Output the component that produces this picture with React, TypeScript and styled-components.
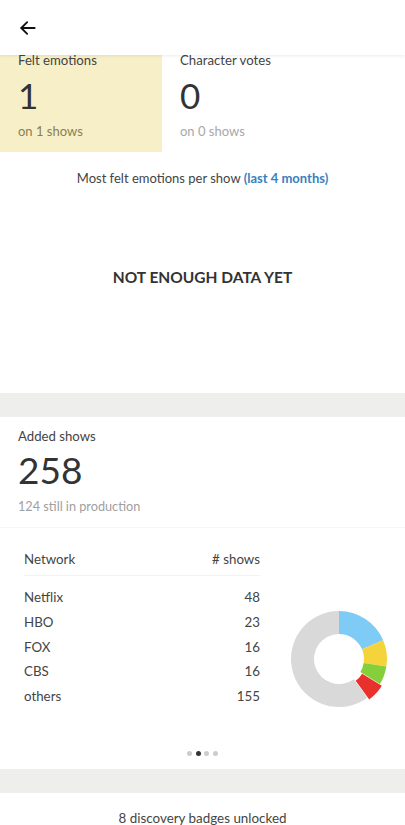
import * as React from 'react';
import styled, { createGlobalStyle } from 'styled-components';

const GlobalStyle = createGlobalStyle`
  html, body {
    margin: 0;
    padding: 0;
    background: #ffffff;
    font-family: Lato, "Open Sans", sans-serif;
    color: #333333;
  }
`;

const Page = styled.div`
  width: 405px;
  height: 825px;
  overflow: hidden;
  background: #ffffff;
  position: relative;
`;

const Header = styled.header`
  height: 55px;
  display: flex;
  align-items: center;
  padding-left: 18px;
  background: #ffffff;
  box-shadow: 0 1px 3px rgba(0, 0, 0, 0.08);
  position: relative;
  z-index: 1;
`;

const StatsRow = styled.div`
  display: flex;
  height: 97px;
`;

const StatCard = styled.div<{ highlight?: boolean }>`
  width: 162px;
  padding: 0 0 0 18px;
  box-sizing: border-box;
  background: ${({ highlight }) => (highlight ? '#f7efc8' : 'transparent')};
  display: flex;
  flex-direction: column;
`;

const StatLabel = styled.div`
  font-size: 13.2px;
  line-height: 15px;
  color: #444444;
  margin-top: -2px;
`;

const StatNumber = styled.div`
  font-size: 35px;
  line-height: 38px;
  color: #333333;
  margin-top: 8px;
`;

const StatSub = styled.div<{ highlight?: boolean }>`
  font-size: 13px;
  line-height: 15px;
  color: ${({ highlight }) => (highlight ? '#8a8050' : '#a8a8a8')};
  margin-top: 10px;
`;

const EmotionSection = styled.section`
  height: 241px;
  display: flex;
  flex-direction: column;
  align-items: center;
`;

const EmotionTitle = styled.div`
  margin-top: 19px;
  font-size: 13px;
  line-height: 15px;
  color: #444444;
  strong {
    color: #3a7fc0;
    font-weight: 700;
  }
`;

const EmptyNote = styled.div`
  margin-top: 82px;
  font-size: 15.5px;
  font-weight: 700;
  color: #333333;
`;

const Band = styled.div`
  height: 24px;
  background: #eeeeec;
`;

const AddedSection = styled.section`
  padding: 12px 18px 0;
  height: 111px;
  box-sizing: border-box;
  border-bottom: 1px solid #f5f5f5;
`;

const AddedLabel = styled.div`
  font-size: 13.2px;
  line-height: 15px;
  color: #444444;
`;

const AddedNumber = styled.div`
  font-size: 37px;
  line-height: 38px;
  color: #333333;
  margin-top: 7px;
`;

const AddedSub = styled.div`
  font-size: 12.7px;
  line-height: 15px;
  color: #a0a0a0;
  margin-top: 10px;
`;

const NetworkArea = styled.div`
  display: flex;
  align-items: flex-start;
  padding: 24px 0 0 24px;
  height: 241px;
  box-sizing: border-box;
  position: relative;
`;

const Table = styled.div`
  width: 236px;
  display: flex;
  flex-direction: column;
`;

const HeadRow = styled.div`
  display: flex;
  justify-content: space-between;
  font-size: 13.3px;
  line-height: 15px;
  color: #444444;
  padding-bottom: 8px;
  border-bottom: 1px solid #f3f3f3;
  margin-bottom: 14px;
`;

const Row = styled.div`
  display: flex;
  justify-content: space-between;
  font-size: 13.3px;
  line-height: 15px;
  height: 24.8px;
  color: #444444;
`;

const ChartBox = styled.div`
  margin-left: 29px;
  margin-top: 57px;
`;

const Dots = styled.div`
  position: absolute;
  left: 0;
  right: 0;
  bottom: 13px;
  display: flex;
  justify-content: center;
  gap: 3.5px;
`;

const Dot = styled.span<{ active?: boolean }>`
  width: 5px;
  height: 5px;
  border-radius: 50%;
  background: ${({ active }) => (active ? '#333333' : '#cccccc')};
`;

const BadgeLine = styled.div`
  text-align: center;
  font-size: 13.4px;
  line-height: 15px;
  color: #444444;
  padding-top: 18px;
`;

const networks = [
  { name: 'Netflix', count: 48, color: '#7ecbf6' },
  { name: 'HBO', count: 23, color: '#f5d33a' },
  { name: 'FOX', count: 16, color: '#86cf3c' },
  { name: 'CBS', count: 16, color: '#e8302c' },
  { name: 'others', count: 155, color: '#d9d9d9' },
];

function polar(cx: number, cy: number, r: number, deg: number) {
  const a = ((deg - 90) * Math.PI) / 180;
  return [cx + r * Math.cos(a), cy + r * Math.sin(a)];
}

function arcPath(cx: number, cy: number, ro: number, ri: number, a0: number, a1: number) {
  const large = a1 - a0 > 180 ? 1 : 0;
  const [x0, y0] = polar(cx, cy, ro, a0);
  const [x1, y1] = polar(cx, cy, ro, a1);
  const [x2, y2] = polar(cx, cy, ri, a1);
  const [x3, y3] = polar(cx, cy, ri, a0);
  return `M${x0} ${y0} A${ro} ${ro} 0 ${large} 1 ${x1} ${y1} L${x2} ${y2} A${ri} ${ri} 0 ${large} 0 ${x3} ${y3} Z`;
}

function Donut() {
  const total = networks.reduce((s, n) => s + n.count, 0);
  let start = 0;
  return (
    <svg width="100" height="100" viewBox="0 0 100 100">
      {networks.map((n, i) => {
        const sweep = (n.count / total) * 360;
        const a0 = start;
        const a1 = start + sweep;
        start = a1;
        const exploded = n.name === 'CBS';
        const mid = (a0 + a1) / 2;
        const [dx, dy] = exploded ? polar(0, 0, 2.5, mid) : [0, 0];
        return (
          <path
            key={i}
            d={arcPath(50 + dx, 50 + dy, 48, 25, a0, a1)}
            fill={n.color}
          />
        );
      })}
    </svg>
  );
}

function BackArrow() {
  return (
    <svg width="20" height="20" viewBox="0 0 24 24" fill="none" stroke="#111" strokeWidth="2.2" strokeLinecap="round" strokeLinejoin="round">
      <path d="M20 12H4" />
      <path d="M11 5l-7 7 7 7" />
    </svg>
  );
}

export default function App() {
  return (
    <Page>
      <GlobalStyle />
      <Header>
        <BackArrow />
      </Header>
      <StatsRow>
        <StatCard highlight>
          <StatLabel>Felt emotions</StatLabel>
          <StatNumber>1</StatNumber>
          <StatSub highlight>on 1 shows</StatSub>
        </StatCard>
        <StatCard>
          <StatLabel>Character votes</StatLabel>
          <StatNumber>0</StatNumber>
          <StatSub>on 0 shows</StatSub>
        </StatCard>
      </StatsRow>
      <EmotionSection>
        <EmotionTitle>
          Most felt emotions per show <strong>(last 4 months)</strong>
        </EmotionTitle>
        <EmptyNote>NOT ENOUGH DATA YET</EmptyNote>
      </EmotionSection>
      <Band />
      <AddedSection>
        <AddedLabel>Added shows</AddedLabel>
        <AddedNumber>258</AddedNumber>
        <AddedSub>124 still in production</AddedSub>
      </AddedSection>
      <NetworkArea>
        <Table>
          <HeadRow>
            <span>Network</span>
            <span># shows</span>
          </HeadRow>
          {networks.map((n) => (
            <Row key={n.name}>
              <span>{n.name}</span>
              <span>{n.count}</span>
            </Row>
          ))}
        </Table>
        <ChartBox>
          <Donut />
        </ChartBox>
        <Dots>
          <Dot />
          <Dot active />
          <Dot />
          <Dot />
        </Dots>
      </NetworkArea>
      <Band />
      <BadgeLine>8 discovery badges unlocked</BadgeLine>
    </Page>
  );
}
